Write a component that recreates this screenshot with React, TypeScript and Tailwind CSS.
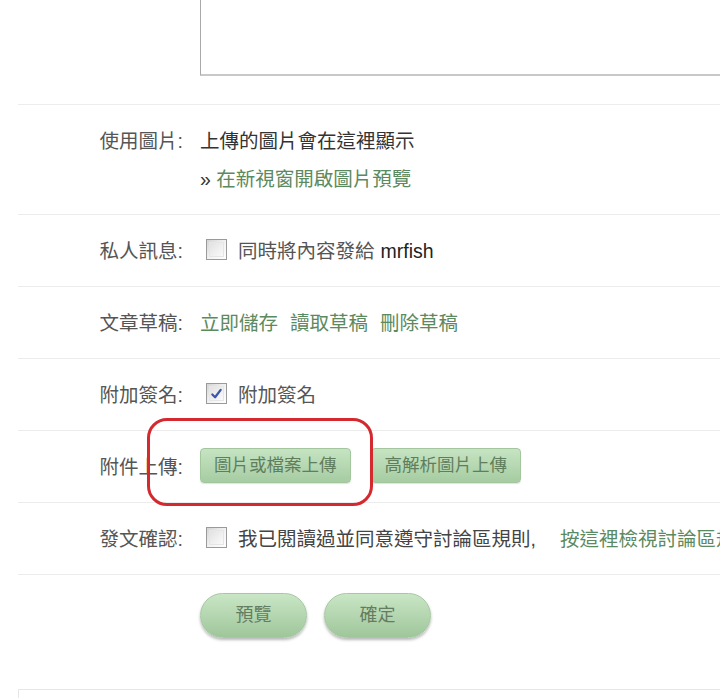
import type { ReactNode } from "react";

const font = { fontFamily: '"Liberation Sans", "Noto Sans CJK TC", sans-serif' };

function Checkbox({ checked = false }: { checked?: boolean }) {
  return (
    <span className="mt-[-3px] mr-[11px] ml-[6px] inline-flex h-[21px] w-[21px] shrink-0 items-center justify-center border border-[#9a9a9a] bg-gradient-to-br from-[#d4d4d4] via-[#f2f2f2] to-[#ffffff] p-[2px]">
      <span className="flex h-full w-full items-center justify-center border border-[#e6e6e6] bg-gradient-to-br from-[#e2e2e2] to-[#fafafa]">
        {checked && (
          <svg viewBox="0 0 14 14" className="h-[14px] w-[14px]">
            <path
              d="M2.5 7.5 L5.5 10.5 L11.5 2.5"
              fill="none"
              stroke="#3b57ad"
              strokeWidth="2.4"
              strokeLinecap="round"
              strokeLinejoin="round"
            />
          </svg>
        )}
      </span>
    </span>
  );
}

function Row({ label, children }: { label?: string; children: ReactNode }) {
  return (
    <div className="flex border-b border-[#ececec] pt-[17px] pb-[16px] leading-[38px]">
      <div className="w-[167px] shrink-0 pr-[2px] text-right text-[#555]">{label}</div>
      <div className="ml-[15px] flex-1">{children}</div>
    </div>
  );
}

function FlatButton({ children }: { children: ReactNode }) {
  return (
    <button className="h-[35px] rounded-[4px] border border-[#a3c69f] bg-gradient-to-b from-[#c6e4c2] to-[#a6cca2] px-[13px] text-[17.5px] leading-[33px] text-[#607e5e] shadow-[0_1px_1px_rgba(0,0,0,0.12)]">
      {children}
    </button>
  );
}

function PillButton({ children }: { children: ReactNode }) {
  return (
    <button className="h-[45px] w-[107px] rounded-full border border-[#a8c8a4] bg-gradient-to-b from-[#c9e6c5] to-[#9fc69b] text-[18px] text-[#647d62] shadow-[0_2px_3px_rgba(0,0,0,0.28)]">
      {children}
    </button>
  );
}

export default function App() {
  return (
    <div className="relative h-[698px] w-[720px] overflow-hidden bg-white text-[19.5px] text-[#333]" style={font}>
      <div className="ml-[18px] w-[900px]">
        <div className="flex border-b border-[#ececec] pb-[28px]">
          <div className="w-[182px] shrink-0" />
          <div className="h-[76px] flex-1 border-r border-b-2 border-l border-[#a9a9a9] border-b-[#c8c8c8]" />
        </div>

        <Row label="使用圖片:">
          <div>上傳的圖片會在這裡顯示</div>
          <div>
            <span className="text-[#333]">» </span>
            <a className="text-[#5c8a60]">在新視窗開啟圖片預覽</a>
          </div>
        </Row>

        <Row label="私人訊息:">
          <div className="flex items-center">
            <Checkbox />
            <span className="text-[#555]">同時將內容發給</span>
            <span className="ml-[6px] text-[#222]">mrfish</span>
          </div>
        </Row>

        <Row label="文章草稿:">
          <div className="flex gap-[12px] text-[#5c8a60]">
            <a>立即儲存</a>
            <a>讀取草稿</a>
            <a>刪除草稿</a>
          </div>
        </Row>

        <Row label="附加簽名:">
          <div className="flex items-center">
            <Checkbox checked />
            <span className="text-[#555]">附加簽名</span>
          </div>
        </Row>

        <Row label="附件上傳:">
          <div className="flex items-center gap-[20px]">
            <FlatButton>圖片或檔案上傳</FlatButton>
            <FlatButton>高解析圖片上傳</FlatButton>
          </div>
        </Row>

        <Row label="發文確認:">
          <div className="flex items-center whitespace-nowrap">
            <Checkbox />
            <span className="text-[#444]">我已閱讀過並同意遵守討論區規則,</span>
            <a className="ml-[24px] text-[#5c8a60]">按這裡檢視討論區規則</a>
          </div>
        </Row>

        <div className="flex pt-[18px] pb-[51px]">
          <div className="w-[182px] shrink-0" />
          <div className="flex gap-[17px]">
            <PillButton>預覽</PillButton>
            <PillButton>確定</PillButton>
          </div>
        </div>

        <div className="h-[40px] border-t border-l border-[#e6e6e6]" />
      </div>

      <div className="pointer-events-none absolute top-[418px] left-[147px] h-[88px] w-[226px] rounded-[20px] border-[3px] border-[#d42a2f]" />
    </div>
  );
}
